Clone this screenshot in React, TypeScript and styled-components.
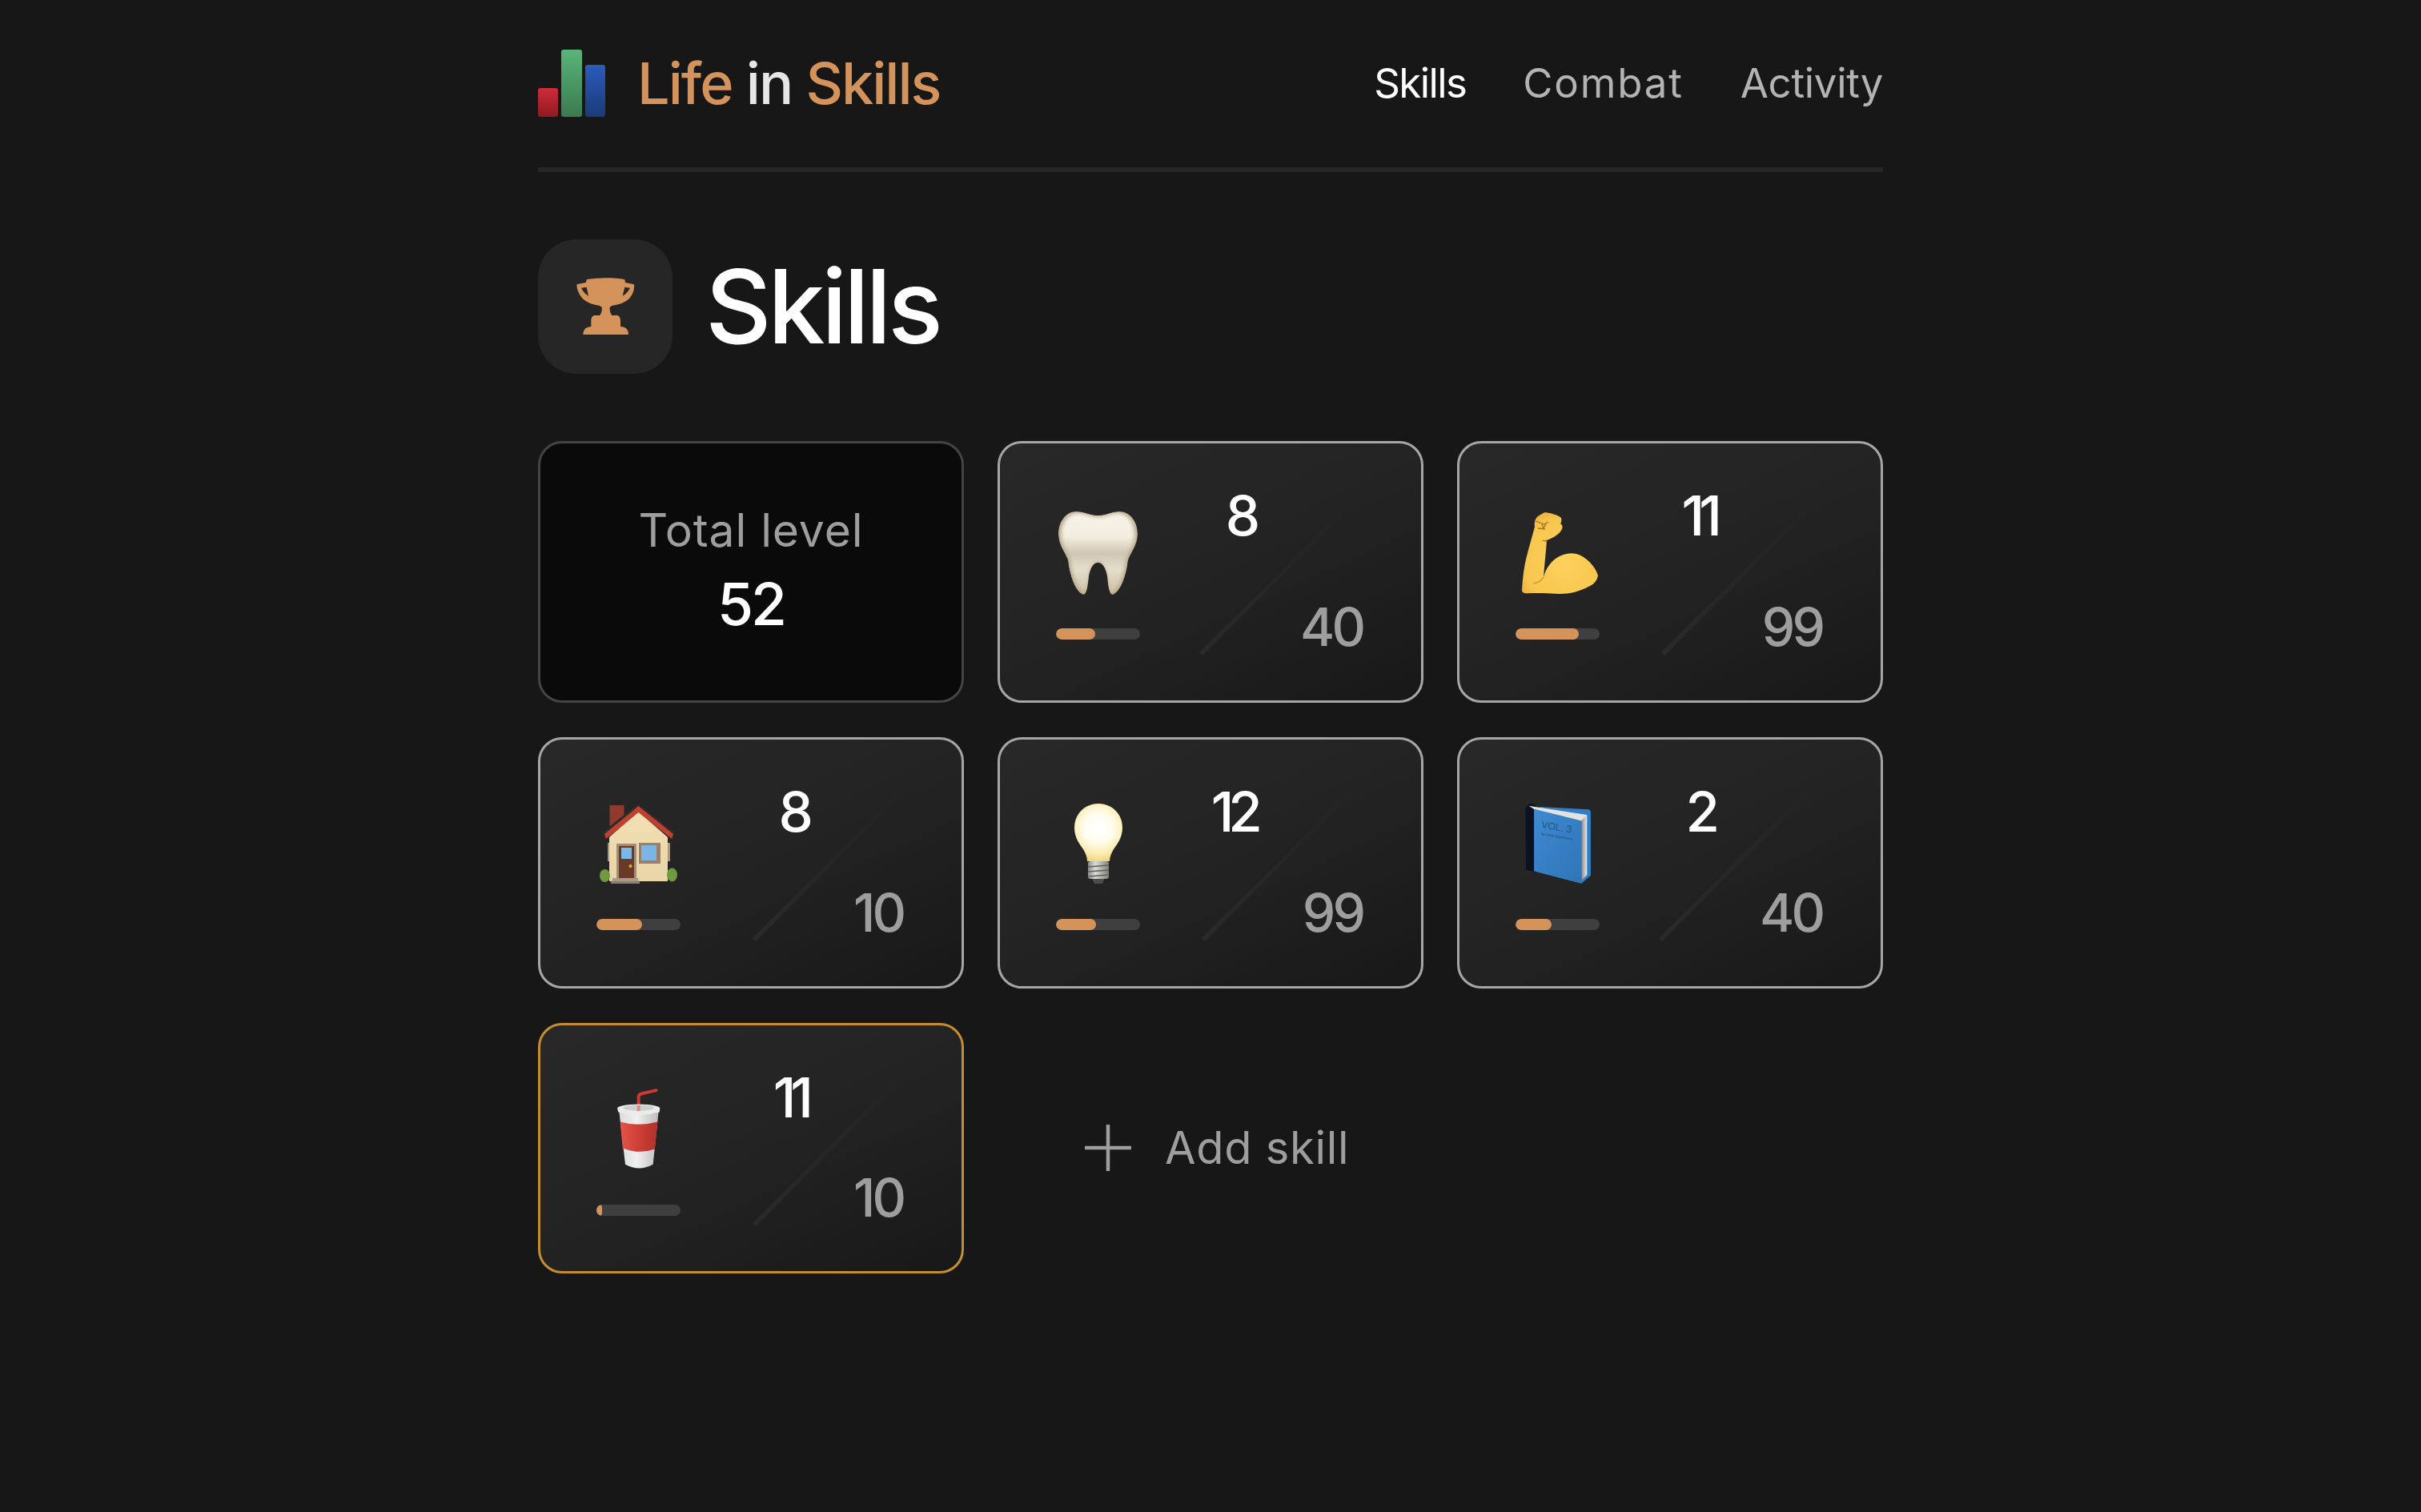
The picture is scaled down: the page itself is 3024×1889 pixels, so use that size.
import React from "react";
import styled, { createGlobalStyle } from "styled-components";

const Global = createGlobalStyle`
  html, body { margin: 0; padding: 0; background: #171717; }
  * { box-sizing: border-box; }
  body { font-family: Inter, "Noto Sans", "Liberation Sans", sans-serif; }
`;

const Page = styled.div`
  width: 1680px;
  min-height: 1889px;
  margin: 0 auto;
`;

const Header = styled.header`
  display: flex;
  align-items: center;
  justify-content: space-between;
  padding: 62px 0 63px;
  border-bottom: 6px solid #262626;
`;

const Brand = styled.div`
  display: flex;
  align-items: center;
  gap: 40px;
`;

const BrandName = styled.div`
  font-size: 72px;
  line-height: 84px;
  font-weight: 500;
  letter-spacing: -2px;
  color: #d4935a;
  span { color: #e6e6e6; }
`;

const Nav = styled.nav`
  display: flex;
  gap: 71px;
  align-items: center;
`;

const NavLink = styled.a<{ $active?: boolean; $spacing: number }>`
  font-size: 51px;
  line-height: 60px;
  font-weight: 400;
  letter-spacing: ${(p) => p.$spacing}px;
  color: ${(p) => (p.$active ? "#ffffff" : "#b3b3b3")};
`;

const TitleRow = styled.div`
  display: flex;
  align-items: center;
  gap: 41px;
  margin-top: 84px;
`;

const IconBox = styled.div`
  width: 168px;
  height: 168px;
  border-radius: 48px;
  background: #262626;
  display: flex;
  align-items: center;
  justify-content: center;
`;

const Title = styled.h1`
  margin: 0;
  font-size: 128px;
  line-height: 168px;
  font-weight: 550;
  letter-spacing: -4.6px;
  color: #ffffff;
`;

const Grid = styled.div`
  display: grid;
  grid-template-columns: repeat(3, 1fr);
  column-gap: 42px;
  row-gap: 43px;
  margin-top: 84px;
`;

const TotalCard = styled.div`
  min-height: 327px;
  border-radius: 30px;
  border: 3px solid #444444;
  background: #0a0a0a;
  display: flex;
  flex-direction: column;
  align-items: center;
  justify-content: center;
  padding-bottom: 3px;
`;

const TotalLabel = styled.div`
  font-size: 57px;
  line-height: 72px;
  letter-spacing: 0.9px;
  color: #9e9e9e;
`;

const TotalValue = styled.div`
  margin-top: 12px;
  font-size: 73px;
  line-height: 88px;
  font-weight: 500;
  letter-spacing: -3px;
  color: #ffffff;
`;

const Card = styled.div<{ $gold?: boolean }>`
  min-height: 313.5px;
  border-radius: 30px;
  border: 3px solid ${(p) => (p.$gold ? "#c48d30" : "#a6a6a6")};
  background: linear-gradient(155deg, #282828 0%, #232323 50%, #181818 100%);
  display: flex;
  align-items: center;
  padding-left: 70px;
  padding-right: 73px;
`;

const LeftCol = styled.div`
  width: 105px;
  display: flex;
  flex-direction: column;
  align-items: center;
`;

const EmojiBox = styled.div`
  height: 122px;
  width: 105px;
  margin-bottom: 33px;
  display: flex;
  align-items: center;
  justify-content: center;
`;

const Track = styled.div`
  width: 105px;
  height: 14px;
  border-radius: 7px;
  background: #3f3f3f;
  overflow: hidden;
`;

const Fill = styled.div`
  height: 100%;
  border-radius: 7px;
  background: #d4935a;
`;

const Ratio = styled.div`
  margin-left: auto;
  align-self: stretch;
  display: grid;
  grid-template-columns: auto auto;
  grid-template-rows: auto auto;
  align-content: space-between;
  column-gap: 57px;
  padding: 56px 0 59px;
`;

const Level = styled.div`
  grid-column: 1;
  grid-row: 1;
  justify-self: end;
  font-size: 69px;
  line-height: 69px;
  font-weight: 500;
  letter-spacing: -7px;
  color: #ffffff;
`;

const Max = styled.div`
  grid-column: 2;
  grid-row: 2;
  position: relative;
  font-size: 66px;
  line-height: 66px;
  font-weight: 500;
  letter-spacing: -4px;
  color: #9e9e9e;
`;

const Slash = styled.svg`
  position: absolute;
  left: -127px;
  bottom: -4px;
  width: 205px;
  height: 205px;
  pointer-events: none;
`;

const AddCell = styled.div`
  display: flex;
  align-items: center;
  gap: 42px;
  padding-left: 109px;
  grid-column: span 2;
`;

const AddLabel = styled.div`
  font-size: 56px;
  line-height: 70px;
  letter-spacing: 0.7px;
  color: #9e9e9e;
`;

const Logo = () => (
  <svg width="84" height="84" viewBox="0 0 84 84">
    <defs>
      <linearGradient id="lr" x1="0" y1="0" x2="0" y2="1">
        <stop offset="0" stopColor="#cf2c38" />
        <stop offset="1" stopColor="#8e1a22" />
      </linearGradient>
      <linearGradient id="lg" x1="0" y1="0" x2="0" y2="1">
        <stop offset="0" stopColor="#5ab57a" />
        <stop offset="1" stopColor="#3a7a50" />
      </linearGradient>
      <linearGradient id="lb" x1="0" y1="0" x2="0" y2="1">
        <stop offset="0" stopColor="#2a5cbc" />
        <stop offset="1" stopColor="#1b3a78" />
      </linearGradient>
    </defs>
    <rect x="0" y="48" width="25" height="36" rx="3" fill="url(#lr)" />
    <rect x="29" y="0" width="26" height="84" rx="3" fill="url(#lg)" />
    <rect x="59" y="19" width="25" height="65" rx="3" fill="url(#lb)" />
  </svg>
);

const Trophy = () => (
  <svg width="90" height="90" viewBox="0 0 270 270">
    <path
      fillRule="evenodd"
      fill="#d4935a"
      d="M66 33 Q137 22 208 33 L210 45 L243 52 Q246 80 225 105 Q205 125 160 132 L152 137 Q150 155 160 168 L180 168 Q190 170 192 185 L192 210 L205 212 Q222 218 222 240 L52 240 Q52 218 70 212 L82 210 L82 185 Q84 170 95 168 L115 168 Q125 155 122 137 L114 132 Q70 125 50 105 Q28 80 28 52 L62 45 Z M45 65 L65 62 L72 95 Q55 85 45 65 Z M228 65 L208 62 L200 95 Q218 85 228 65 Z"
    />
  </svg>
);

const TOOTH =
  "M22 0 C32 0 40 5 49.5 5 C59 5 67 0 76 0 C90 0 99 13 99 28 C99 42 91 50 87 61 C85 80 78 100 68 104 C63 104 62 90 61 81 C59 70 55 64 49.5 64 C44 64 40 70 38 81 C37 90 36 104 31 104 C21 100 14 80 12 61 C8 50 0 42 0 28 C0 13 9 0 22 0 Z";

const Tooth = () => (
  <svg width="99" height="104" viewBox="0 0 99 104">
    <defs>
      <linearGradient id="tg" x1="0" y1="0" x2="0" y2="1">
        <stop offset="0" stopColor="#f7f3e7" />
        <stop offset="0.3" stopColor="#f3eee0" />
        <stop offset="0.5" stopColor="#cfc5b2" />
        <stop offset="0.7" stopColor="#e5dfcd" />
        <stop offset="1" stopColor="#cfc1a5" />
      </linearGradient>
      <clipPath id="tc">
        <path d={TOOTH} />
      </clipPath>
      <filter id="tb">
        <feGaussianBlur stdDeviation="2.5" />
      </filter>
    </defs>
    <g clipPath="url(#tc)">
      <path d={TOOTH} fill="#b5a78c" />
      <g filter="url(#tb)">
        <path d={TOOTH} fill="url(#tg)" transform="translate(49.5 50) scale(.93 .96) translate(-49.5 -50)" />
      </g>
    </g>
  </svg>
);

const Arm = () => (
  <svg width="100" height="103" viewBox="-5 0 100 103">
    <defs>
      <radialGradient id="ag" cx="0.55" cy="0.6" r="0.75">
        <stop offset="0" stopColor="#fcd25c" />
        <stop offset="0.7" stopColor="#f8c64e" />
        <stop offset="1" stopColor="#e6a333" />
      </radialGradient>
    </defs>
    <path
      fill="url(#ag)"
      d="M29 0 C36 1 44 3 49 7 C50 10 49 13 48 14 C51 16 51 19 50 21 C47 27 41 31 31 35 C30 50 28 66 27 81 C30 70 36 62 42 58 C50 52 60 50 68 52 C80 55 92 68 95 79 C94 85 90 90 85 92 C72 99 60 102 47 102 C33 101 20 101 10 101 C4 102 0 101 0 97 C1 80 3 66 6 55 C9 42 13 30 16 18 C15 12 17 7 20 5 C23 3 26 1 29 0 Z"
    />
    <path fill="none" stroke="#a86f1c" strokeWidth="1.3" d="M17 11 L28 15 L33 12 M25 15 L27 20 L30 15 M20 20 L29 21 M26 35 C28 36 30 36 31 35" />
    <path fill="none" stroke="#d99c2e" strokeWidth="1.5" d="M27 81 C24 86 20 88 14 89" />
  </svg>
);

const House = () => (
  <svg width="97" height="100" viewBox="0 0 97 100">
    <defs>
      <linearGradient id="hw" x1="0" y1="0" x2="0" y2="1">
        <stop offset="0" stopColor="#f2e0b4" />
        <stop offset="1" stopColor="#e8d6a8" />
      </linearGradient>
    </defs>
    <rect x="12.5" y="2" width="18" height="26" fill="#8f3a2e" />
    <rect x="10" y="49" width="3" height="23" fill="#a9987c" />
    <rect x="85" y="49" width="3" height="23" fill="#a9987c" />
    <path d="M12 42 L48.5 10 L85 42 L85 97 L12 97 Z" fill="url(#hw)" />
    <path d="M3 36 L48.5 0 L94 36 L92 42 L48.5 8 L6 42 Z" fill="#2d2a28" />
    <path d="M6 38 L48.5 3 L92 38 L90 44 L48.5 11 L8 44 Z" fill="#c0402f" />
    <rect x="21" y="50" width="25" height="44" fill="#a48d74" />
    <rect x="24" y="53" width="19" height="41" fill="#6b3a26" />
    <rect x="27" y="55" width="13" height="14" fill="#7ab8e6" />
    <circle cx="38.5" cy="78" r="2" fill="#e0b030" />
    <rect x="49" y="49" width="27" height="26" fill="#9b8068" />
    <rect x="52" y="52" width="19" height="19" fill="#7ab5e4" />
    <ellipse cx="6.5" cy="90" rx="6.5" ry="8" fill="#6f9a3e" />
    <ellipse cx="90.5" cy="89" rx="6.5" ry="8.5" fill="#6f9a3e" />
    <rect x="16" y="93" width="32" height="3.5" fill="#a89a88" />
    <rect x="14" y="96.5" width="36" height="3.5" fill="#8a7f72" />
  </svg>
);

const Bulb = () => (
  <svg width="60" height="100" viewBox="0 0 60 100">
    <defs>
      <radialGradient id="bg" cx="30" cy="30" r="44" gradientUnits="userSpaceOnUse">
        <stop offset="0" stopColor="#ffffff" />
        <stop offset="0.4" stopColor="#fffdf0" />
        <stop offset="0.72" stopColor="#fbeeb5" />
        <stop offset="1" stopColor="#efd07a" />
      </radialGradient>
      <linearGradient id="bs" x1="0" y1="0" x2="1" y2="0">
        <stop offset="0" stopColor="#8c8c88" />
        <stop offset="0.35" stopColor="#dcdcd6" />
        <stop offset="1" stopColor="#80807c" />
      </linearGradient>
    </defs>
    <path
      fill="url(#bg)"
      d="M30 0 C47 0 60 13 60 30 C60 42 54 50 49 57 C46 62 44 67 44 72 L16 72 C16 67 14 62 11 57 C6 50 0 42 0 30 C0 13 13 0 30 0 Z"
    />
    <path d="M22 93 L38 93 L35 100 L25 100 Z" fill="#4d4d49" />
    <rect x="17" y="72" width="26" height="22" rx="3" fill="url(#bs)" />
    <path stroke="#5f5f5b" strokeWidth="1.4" fill="none" d="M17 79 L43 77 M17 85 L43 83 M18 91 L42 89" />
  </svg>
);

const Book = () => (
  <svg width="82" height="102" viewBox="45 25 245 305">
    <defs>
      <linearGradient id="bk" x1="0" y1="0" x2="1" y2="1">
        <stop offset="0" stopColor="#3f8ad2" />
        <stop offset="1" stopColor="#2f74b8" />
      </linearGradient>
      <linearGradient id="pg" x1="0" y1="0" x2="1" y2="0">
        <stop offset="0" stopColor="#888888" />
        <stop offset="1" stopColor="#ececec" />
      </linearGradient>
    </defs>
    <path d="M100 40 L282 50 Q290 52 290 60 L290 296 L255 326 L80 280 Z" fill="#2f7fc8" />
    <path d="M46 48 Q52 30 66 27 L84 35 L84 282 L48 275 Z" fill="#0c1220" />
    <path d="M58 36 L276 70 L256 94 L80 50 Z" fill="#e3e3de" />
    <path d="M276 70 L276 294 L255 316 L255 92 Z" fill="url(#pg)" />
    <path d="M78 48 L256 92 L256 326 L78 280 Z" fill="url(#bk)" />
    <text x="104" y="118" fontFamily="Liberation Sans, sans-serif" fontSize="37" fill="#255684" transform="rotate(10 104 118)">
      VOL. 3
    </text>
    <text x="104" y="144" fontFamily="Liberation Sans, sans-serif" fontSize="13" fontWeight="700" fill="#255684" transform="rotate(10 104 144)">
      by John Appleseed
    </text>
  </svg>
);

const Cup = () => (
  <svg width="56" height="103" viewBox="85 25 168 308">
    <defs>
      <linearGradient id="cw" x1="0" y1="0" x2="1" y2="0">
        <stop offset="0" stopColor="#dcdcdc" />
        <stop offset="0.45" stopColor="#f0f0f0" />
        <stop offset="1" stopColor="#bcbcbc" />
      </linearGradient>
      <linearGradient id="cr" x1="0" y1="0" x2="1" y2="0">
        <stop offset="0" stopColor="#e5544a" />
        <stop offset="0.5" stopColor="#cc3f36" />
        <stop offset="1" stopColor="#b0322a" />
      </linearGradient>
    </defs>
    <path d="M168 105 L168 58 Q168 50 178 47 L234 34" fill="none" stroke="#c93a32" strokeWidth="12" strokeLinecap="round" />
    <path d="M95 112 L243 112 L222 312 Q170 340 118 312 Z" fill="url(#cw)" />
    <path d="M99 152 Q168 172 239 152 L229 254 Q170 276 108 250 Z" fill="url(#cr)" />
    <path d="M88 102 Q90 88 168 86 Q246 88 248 102 L246 116 Q168 136 92 116 Z" fill="#ebebeb" />
    <ellipse cx="168" cy="100" rx="58" ry="11" fill="#cfcfcf" />
    <rect x="162" y="90" width="12" height="22" fill="#d99088" />
  </svg>
);

const Plus = () => (
  <svg width="58" height="58" viewBox="0 0 58 58">
    <path d="M29 1 L29 57 M1 29 L57 29" stroke="#9e9e9e" strokeWidth="4.5" strokeLinecap="round" />
  </svg>
);

type Skill = { id: string; icon: React.ReactNode; level: number; max: number; pct: number; gold?: boolean };

const skills: Skill[] = [
  { id: "tooth", icon: <Tooth />, level: 8, max: 40, pct: 46.5 },
  { id: "arm", icon: <Arm />, level: 11, max: 99, pct: 75 },
  { id: "house", icon: <House />, level: 8, max: 10, pct: 54 },
  { id: "bulb", icon: <Bulb />, level: 12, max: 99, pct: 48 },
  { id: "book", icon: <Book />, level: 2, max: 40, pct: 43 },
  { id: "cup", icon: <Cup />, level: 11, max: 10, pct: 6.5, gold: true },
];

const SkillCard = ({ skill }: { skill: Skill }) => (
  <Card $gold={skill.gold}>
    <LeftCol>
      <EmojiBox>{skill.icon}</EmojiBox>
      <Track>
        <Fill style={{ width: `${skill.pct}%` }} />
      </Track>
    </LeftCol>
    <Ratio>
      <Level>{skill.level}</Level>
      <Max>
        <Slash viewBox="0 0 205 205">
          <defs>
            <linearGradient id={`sl-${skill.id}`} gradientUnits="userSpaceOnUse" x1="3" y1="202" x2="202" y2="3">
              <stop offset="0" stopColor="#2a2a2a" />
              <stop offset="1" stopColor="#2a2a2a" stopOpacity="0" />
            </linearGradient>
          </defs>
          <line x1="3" y1="202" x2="202" y2="3" stroke={`url(#sl-${skill.id})`} strokeWidth="6" />
        </Slash>
        {skill.max}
      </Max>
    </Ratio>
  </Card>
);

export default function App() {
  return (
    <>
      <Global />
      <Page>
        <Header>
          <Brand>
            <Logo />
            <BrandName>
              Life <span>in</span> Skills
            </BrandName>
          </Brand>
          <Nav>
            <NavLink $active $spacing={-1.6}>Skills</NavLink>
            <NavLink $spacing={1.8}>Combat</NavLink>
            <NavLink $spacing={-0.3}>Activity</NavLink>
          </Nav>
        </Header>
        <TitleRow>
          <IconBox>
            <Trophy />
          </IconBox>
          <Title>Skills</Title>
        </TitleRow>
        <Grid>
          <TotalCard>
            <TotalLabel>Total level</TotalLabel>
            <TotalValue>52</TotalValue>
          </TotalCard>
          {skills.map((s) => (
            <SkillCard key={s.id} skill={s} />
          ))}
          <AddCell>
            <Plus />
            <AddLabel>Add skill</AddLabel>
          </AddCell>
        </Grid>
      </Page>
    </>
  );
}
